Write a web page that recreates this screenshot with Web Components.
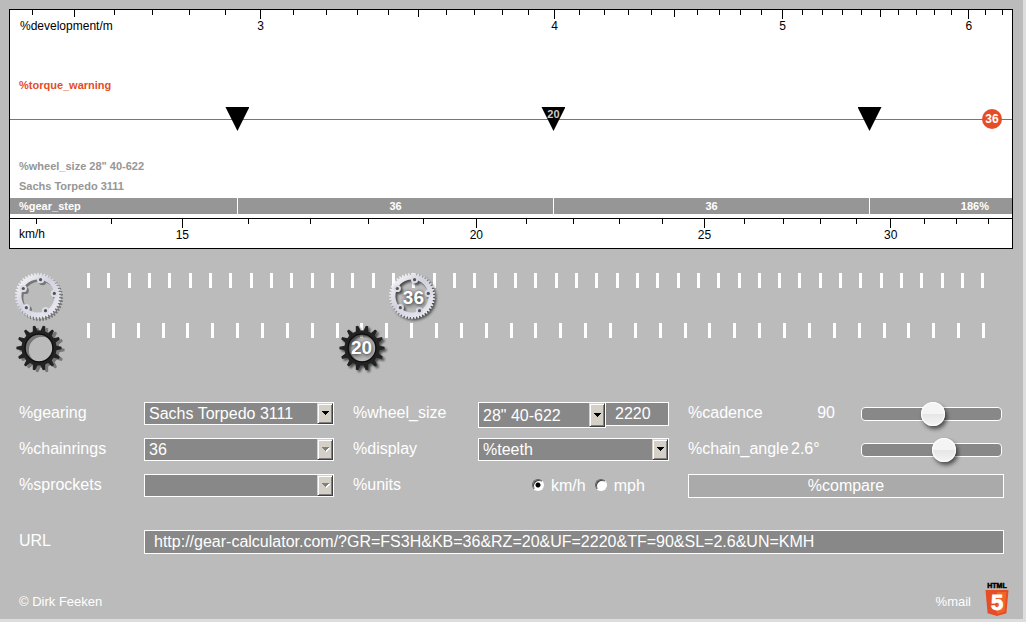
<!DOCTYPE html>
<html lang="en">
<head>
<meta charset="utf-8">
<title>Gear calculator</title>
<style>
  body { margin: 0; background: #ddd; font: 16px "Liberation Sans", Arial, sans-serif; }
</style>
</head>
<body>
<gear-app>
  <gear-chart></gear-chart>
  <section class="tracks">
    <gear-track kind="chainring" min="20" max="64" value="36" label="Chainring teeth"></gear-track>
    <gear-track kind="sprocket" min="9" max="45" value="20" label="Sprocket teeth"></gear-track>
  </section>
  <gear-form></gear-form>
  <gear-footer></gear-footer>
</gear-app>

<script>
const define = (name, html, setup) => {
  const template = document.createElement('template');
  template.innerHTML = html;
  customElements.define(name, class extends HTMLElement {
    connectedCallback() {
      if (this.shadowRoot) return;
      const root = this.attachShadow({ mode: 'open' });
      root.append(template.content.cloneNode(true));
      if (setup) setup(this, root);
    }
  });
};

/* Page shell */
define('gear-app', `
<style>
  :host { display: flex; flex-direction: column; background: #bbb; color: #fff; margin: 0 3px 3px 0; padding: 9px 0 3px; }
  ::slotted(gear-chart) { margin: 0 10px 24px 9px; }
  ::slotted(section) { margin-bottom: 29px; }
</style>
<slot></slot>`);

/* Logarithmic ruler. Positions are percentages of the chart width. */
const logPos = (v, ref, at) => at + 102 * Math.log(v / ref);

define('log-axis', `
<style>
  :host { display: block; color: #000; font-size: 12px; }
  svg { display: block; width: 100%; height: 100%; overflow: hidden; }
  line { stroke: #000; shape-rendering: crispEdges; }
  text { fill: #000; text-anchor: middle; }
  text.unit { text-anchor: start; }
</style>
<svg></svg>`, (el, root) => {
  const n = k => +el.getAttribute(k);
  const labelY = n('baseline');
  let out = `<text class="unit" x="${n('unit-x')}" y="${n('unit-y')}">${el.getAttribute('unit')}</text>`;
  for (let i = n('from'); i <= n('to'); i++) {
    const v = i / n('div');
    const x = logPos(v, n('ref'), n('at')).toFixed(2) + '%';
    const major = i % n('major') === 0;
    const half = n('half') && i % n('half') === 0;
    out += `<line x1="${x}" x2="${x}" y1="0" y2="${major ? 9 : half ? 7 : 5}"/>`;
    if (major) out += `<text x="${x}" y="${labelY}">${v}</text>`;
  }
  root.querySelector('svg').innerHTML = out;
});

define('gear-chart', `
<style>
  :host { display: block; background: #fff; border: 1px solid #000; font-size: 11px; font-weight: bold; }
  log-axis { font-weight: normal; }
  .top { height: 26px; }
  .warning { margin: 42px 0 15px 9px; line-height: 14px; color: #e44d26; }
  .lane { position: relative; height: 24px; margin-bottom: 25px; background: linear-gradient(#e44d26, #e44d26) 0 12px / 100% 1px no-repeat; }
  .gear { position: absolute; top: 0; width: 24px; height: 24px; margin-left: -12px; background: #000; clip-path: polygon(0 0, 100% 0, 50% 100%); color: #ccc; text-align: center; line-height: 14px; }
  .ring { position: absolute; top: 2px; right: 10px; width: 20px; height: 20px; border-radius: 50%; background: #e44d26; color: #fff; text-align: center; line-height: 21px; font-size: 12px; }
  .info { margin-left: 9px; line-height: 20px; color: #969696; }
  .steps { display: grid; grid-template-columns: 228fr 316fr 316fr 142fr; margin: 2px 0 4px; height: 16px; line-height: 16px; background: #969696; color: #fff; }
  .steps span { border-right: 1px solid #fff; text-align: center; }
  .steps .name { text-align: left; padding-left: 9px; }
  .steps .total { text-align: right; border: 0; padding-right: 23px; }
  .bottom { height: 29px; border-top: 1px solid #000; }
</style>
<log-axis class="top" unit="%development/m" unit-x="10" unit-y="20" baseline="20" from="24" to="62" div="10" major="10" half="5" ref="3" at="25"></log-axis>
<div class="warning">%torque_warning</div>
<div class="lane"></div>
<div class="info">%wheel_size 28" 40-622</div>
<div class="info">Sachs Torpedo 3111</div>
<div class="steps"><span class="name">%gear_step</span><span>36</span><span>36</span><span class="total">186%</span></div>
<log-axis class="bottom" unit="km/h" unit-x="9" unit-y="19" baseline="20" from="13" to="33" div="1" major="5" ref="15" at="17.2"></log-axis>
`, (el, root) => {
  root.querySelector('.lane').innerHTML = [[2.933, ''], [3.996, '20'], [5.444, '']]
    .map(([d, t]) => `<div class="gear" style="left:${logPos(d, 3, 25).toFixed(2)}%">${t}</div>`).join('') +
    '<div class="ring">36</div>';
});

/* Chainring and sprocket drawings */
const polar = (r, a) => `${(r * Math.cos(a)).toFixed(2)} ${(r * Math.sin(a)).toFixed(2)}`;
const toothed = (count, root, tip, wr, wt, phase) => {
  let d = '';
  for (let i = 0; i < count; i++) {
    const a = phase + i * 2 * Math.PI / count, s = 2 * Math.PI / count;
    d += `${i ? 'L' : 'M'}${polar(root, a - s * wr)}L${polar(tip, a - s * wt)}L${polar(tip, a + s * wt)}L${polar(root, a + s * wr)}`;
  }
  return d + 'Z';
};
const hole = r => `M${r} 0A${r} ${r} 0 1 0 ${-r} 0A${r} ${r} 0 1 0 ${r} 0Z`;

define('gear-icon', `
<style>
  :host { display: block; width: 48px; height: 48px; }
  svg { display: block; overflow: visible; filter: drop-shadow(2px 2px 1px #0009); }
  :host([flat]) svg { filter: drop-shadow(2px 2px 0 #777); }
  :host([flat][kind=sprocket]) svg { filter: drop-shadow(3px 2px 0 #777); }
</style>
<svg width="48" height="48" viewBox="-24 -24 48 48"></svg>`, (el, root) => {
  const svg = root.querySelector('svg');
  if (el.getAttribute('kind') === 'chainring') {
    let bolts = '';
    for (let i = 0; i < 5; i++) {
      const a = (-81 + i * 72) * Math.PI / 180;
      const [x, y] = polar(16.5, a).split(' ');
      bolts += `<circle cx="${x}" cy="${y}" r="3.6" fill="#dcdce8"/><circle cx="${x}" cy="${y}" r="1.6" fill="#555"/>`;
    }
    svg.innerHTML = `<defs><linearGradient id="m" x1="0" y1="0" x2="1" y2="1"><stop offset="0" stop-color="#fff"/><stop offset=".45" stop-color="#d2d2de"/><stop offset="1" stop-color="#f2f2fa"/></linearGradient></defs>
      <g transform="translate(-1 -1)"><path fill="url(#m)" fill-rule="evenodd" d="${toothed(44, 21.2, 23.2, .36, .18, 0)}${hole(16.6)}"/>${bolts}</g>`;
  } else {
    svg.innerHTML = `<g transform="translate(0 1)"><path fill="#222" fill-rule="evenodd" d="${toothed(14, 17.6, 22.6, .3, .12, Math.PI)}${hole(13.2)}"/>
      <circle r="14.2" fill="none" stroke="#0c0c0c"/></g>`;
  }
});

/* Tick row with a draggable gear */
define('gear-track', `
<style>
  :host { display: grid; grid-template-columns: 48px 1fr; column-gap: 24px; height: 50px; padding: 0 38px 0 15px; }
  .rail { position: relative; }
  .ticks { display: flex; justify-content: space-between; }
  .ticks i { width: 3px; height: 15px; background: #fff; }
  .thumb { position: absolute; top: 0; width: 48px; height: 48px; margin-left: -23px; }
  .thumb b { position: absolute; inset: 0; text-align: center; font-size: 19px; line-height: 50px; color: #fff; text-shadow: 1px 2px 4px #0009, 0 0 3px #0006; }
  input { position: absolute; top: 0; left: -22px; width: calc(100% + 45px); height: 48px; margin: 0; appearance: none; background: none; cursor: pointer; outline: none; }
  input::-webkit-slider-thumb { appearance: none; width: 48px; height: 48px; background: none; }
</style>
<div class="icon"></div>
<div class="rail">
  <div class="ticks"></div>
  <div class="thumb"><div class="icon"></div><b></b></div>
  <input type="range">
</div>`, (el, root) => {
  const n = k => +el.getAttribute(k);
  const kind = el.getAttribute('kind');
  const input = root.querySelector('input');
  const [still, moving] = root.querySelectorAll('.icon');
  still.innerHTML = `<gear-icon kind="${kind}" flat></gear-icon>`;
  moving.innerHTML = `<gear-icon kind="${kind}"></gear-icon>`;
  root.querySelector('.ticks').innerHTML = '<i></i>'.repeat(n('max') - n('min') + 1);
  input.min = n('min'); input.max = n('max'); input.value = n('value');
  input.setAttribute('aria-label', el.getAttribute('label'));
  const draw = () => {
    const f = (input.value - input.min) / (input.max - input.min);
    root.querySelector('.thumb').style.left = `calc((100% - 3px) * ${f.toFixed(4)})`;
    root.querySelector('b').textContent = input.value;
  };
  input.addEventListener('input', draw);
  draw();
});

/* Drop-down with a bevelled arrow button */
define('bevel-select', `
<style>
  :host { display: block; position: relative; height: 23px; }
  select { appearance: none; display: block; box-sizing: border-box; width: 100%; height: 100%; margin: 0; padding: 0 20px 0 4px; border: 1px solid #fff; border-radius: 0; background: #888; color: #fff; opacity: 1; font: 16px "Liberation Sans", Arial, sans-serif; }
  .arrow { position: absolute; top: 1px; right: 1px; bottom: 1px; width: 16px; box-sizing: border-box; display: grid; place-items: center; background: #d4d0c8; border: 1px solid; border-color: #d4d0c8 #404040 #404040 #d4d0c8; box-shadow: inset 1px 1px #fff, inset -1px -1px #808080; pointer-events: none; }
  path { fill: #000; }
  .lit { display: none; }
  :host([disabled]) path { fill: #808080; }
  :host([disabled]) .lit { display: block; fill: #fff; }
</style>
<select><option></option></select>
<div class="arrow"><svg width="7" height="5" overflow="visible" shape-rendering="crispEdges"><path class="lit" d="M1 1h7v1h-1v1h-1v1h-1v1h-1v-1h-1v-1h-1v-1h-1z"/><path d="M0 0h7v1h-1v1h-1v1h-1v1h-1v-1h-1v-1h-1v-1h-1z"/></svg></div>`, (el, root) => {
  const select = root.querySelector('select');
  select.options[0].textContent = el.getAttribute('value');
  select.setAttribute('aria-label', el.getAttribute('label'));
  select.disabled = el.hasAttribute('disabled');
});

define('form-field', `
<style>
  :host { display: grid; grid-template-columns: 125px 1fr; align-items: start; height: 26px; }
  .label { line-height: 22px; white-space: nowrap; }
</style>
<span class="label"></span>
<slot></slot>`, (el, root) => {
  root.querySelector('.label').textContent = el.getAttribute('label');
});

define('slider-field', `
<style>
  :host { display: grid; grid-template-columns: 103px 44px 1fr; align-items: start; height: 26px; padding-right: 2px; }
  label, output { line-height: 22px; white-space: nowrap; }
  output { text-align: right; }
  :host([unit]) output { text-align: left; }
  input { appearance: none; width: auto; min-width: 0; height: 24px; margin: 0 0 0 26px; background: none; }
  input::-webkit-slider-runnable-track { box-sizing: border-box; height: 14px; border: 1px solid #fff; border-radius: 4px; background: #888; }
  input::-webkit-slider-thumb { appearance: none; width: 24px; height: 24px; margin-top: -6px; border-radius: 50%; background: linear-gradient(#f4f4f4 50%, #e6e6e6 50%, #f4f4f4); box-shadow: 2px 3px 4px #0009, inset 0 0 1px 1px #fff; }
</style>
<label for="r"></label><output for="r"></output><input id="r" type="range">`, (el, root) => {
  const input = root.querySelector('input'), out = root.querySelector('output');
  root.querySelector('label').textContent = el.getAttribute('label');
  for (const k of ['min', 'max', 'step', 'value']) input.setAttribute(k, el.getAttribute(k));
  const draw = () => { out.textContent = input.value + (el.getAttribute('unit') || ''); };
  input.addEventListener('input', draw);
  draw();
});

define('gear-form', `
<style>
  :host { display: block; padding: 0 19px; }
  form { display: grid; grid-template-columns: minmax(0, 315fr) minmax(0, 316fr) minmax(0, 316fr); gap: 10px 19px; }
  input, button { font: 16px "Liberation Sans", Arial, sans-serif; color: #fff; border-radius: 0; box-sizing: border-box; }
  .pair { display: grid; grid-template-columns: 128px 1fr; }
  .pair bevel-select { height: 26px; }
  .box { width: 100%; height: 24px; margin: 0; padding: 0 9px; border: 1px solid #fff; background: #888; }
  .pair .box { border-left: 0; }
  .units { display: flex; align-items: center; height: 23px; padding-left: 54px; }
  .units label { display: flex; align-items: center; margin-right: 9px; }
  .units input { appearance: none; width: 12px; height: 12px; margin: 0 7px 2px 0; border: 1px solid; border-color: #606060 #fff #fff #606060; border-radius: 50%; background: #fff; box-shadow: inset 1px 1px #404040; }
  .units input:checked { background: radial-gradient(circle, #000 2px, #fff 3px); }
  button { height: 24px; padding: 0; border: 1px solid #fff; background: #aaa; }
  .url { grid-column: 1 / -1; display: grid; grid-template-columns: 125px 1fr; margin: 20px 0 28px; }
  .url label { line-height: 22px; }
</style>
<form>
  <form-field label="%gearing"><bevel-select label="%gearing" value="Sachs Torpedo 3111"></bevel-select></form-field>
  <form-field label="%wheel_size"><div class="pair"><bevel-select label="%wheel_size" value='28" 40-622'></bevel-select><input class="box" aria-label="Wheel circumference" value="2220"></div></form-field>
  <slider-field label="%cadence" min="50" max="128" step="1" value="90"></slider-field>
  <form-field label="%chainrings"><bevel-select label="%chainrings" value="36" disabled></bevel-select></form-field>
  <form-field label="%display"><bevel-select label="%display" value="%teeth"></bevel-select></form-field>
  <slider-field label="%chain_angle" min="0.4" max="4" step="0.1" value="2.6" unit="°"></slider-field>
  <form-field label="%sprockets"><bevel-select label="%sprockets" value="" disabled></bevel-select></form-field>
  <form-field label="%units"><div class="units"><label><input type="radio" name="unit" checked>km/h</label><label><input type="radio" name="unit">mph</label></div></form-field>
  <button type="button">%compare</button>
  <div class="url"><label for="url">URL</label><input class="box" id="url" value="http://gear-calculator.com/?GR=FS3H&amp;KB=36&amp;RZ=20&amp;UF=2220&amp;TF=90&amp;SL=2.6&amp;UN=KMH"></div>
</form>`);

define('gear-footer', `
<style>
  :host { display: flex; align-items: flex-end; gap: 14px; padding: 0 14px 0 19px; font-size: 13px; line-height: 28px; }
  span { flex: 1; }
  a { color: inherit; text-decoration: none; }
  svg { display: block; }
  text { font-weight: bold; text-anchor: middle; }
</style>
<span>© Dirk Feeken</span>
<a href="#mail">%mail</a>
<a href="#html5" aria-label="HTML5"><svg width="24" height="34" viewBox="0 0 24 34">
  <text x="12" y="6" font-size="7" fill="#000" stroke="#000" stroke-width=".5">HTML</text>
  <path fill="#e44d26" d="M0.5 8h23l-2.1 23.2L12 34l-9.400-2.800z"/>
  <path fill="#f16529" d="M12 10h9.400l-1.800 19.700L12 32z"/>
  <text x="12" y="28" font-size="22" fill="#fff" stroke="#fff" stroke-width=".8">5</text>
</svg></a>`);
</script>
</body>
</html>
